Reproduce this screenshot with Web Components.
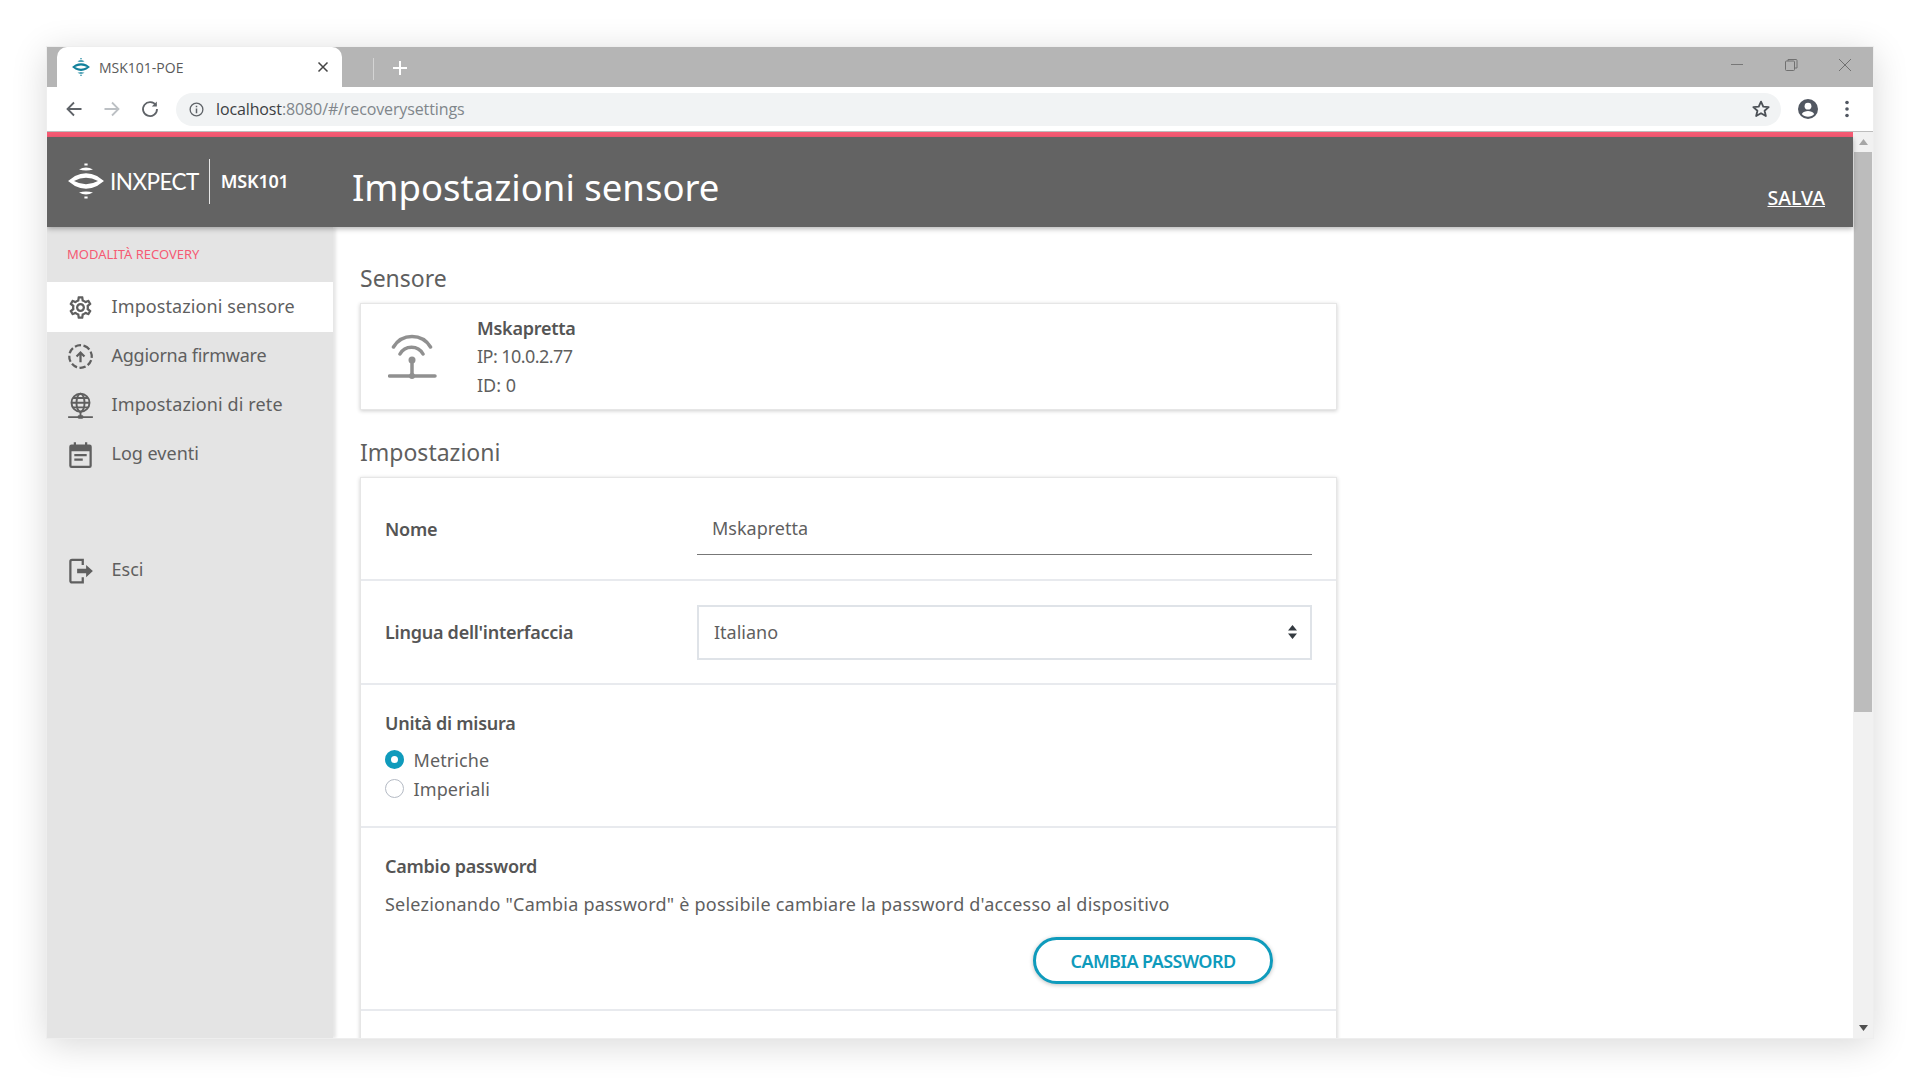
<!DOCTYPE html>
<html lang="it">
<head>
<meta charset="utf-8">
<title>MSK101-POE</title>
<style>
  html, body { margin: 0; height: 100%; background: #fff; overflow: hidden; }
  body { font-family: "Noto Sans", "Open Sans", sans-serif; color: #5f5f5f; }
</style>
</head>
<body>
<browser-window>
  <browser-bar slot="bar"></browser-bar>
  <app-header slot="header" title="Impostazioni sensore"></app-header>
  <side-nav slot="nav">
    <nav-item icon="gear" active style="letter-spacing:.1px">Impostazioni sensore</nav-item>
    <nav-item icon="upload" style="letter-spacing:-.25px">Aggiorna firmware</nav-item>
    <nav-item icon="globe" style="letter-spacing:.12px">Impostazioni di rete</nav-item>
    <nav-item icon="calendar">Log eventi</nav-item>
    <nav-item icon="exit" slot="bottom">Esci</nav-item>
  </side-nav>
  <settings-page slot="main"></settings-page>
</browser-window>

<script>
// Inxpect mark: dots, arcs and a pointed ring with a lens-shaped hole
const LOGO = `
  <rect x="-1.6" y="-17.5" width="3.2" height="2"/>
  <path d="M-7-11.500Q0-15.500 7-11.500Q0-9.500 -7-11.500Z"/>
  <path fill-rule="evenodd" d="M-18 0L-11-5Q0-10.500 11-5L18 0L11 5Q0 10.500-11 5ZM-12 0Q0 6.500 12 0Q0-6.500-12 0Z"/>
  <path d="M-7 11.500Q0 15.500 7 11.500Q0 9.500-7 11.500Z"/>
  <rect x="-1.6" y="15.5" width="3.2" height="2"/>`;

const ICONS = {
  gear: `<path fill="currentColor" d="M19.43 12.98c.04-.32.07-.64.07-.98 0-.34-.03-.66-.07-.98l2.11-1.65c.19-.15.24-.42.12-.64l-2-3.46c-.09-.16-.26-.25-.44-.25-.06 0-.12.01-.17.03l-2.49 1c-.52-.4-1.08-.73-1.69-.98l-.38-2.65C14.46 2.18 14.25 2 14 2h-4c-.25 0-.46.18-.49.42l-.38 2.65c-.61.25-1.17.59-1.69.98l-2.49-1c-.06-.02-.12-.03-.18-.03-.17 0-.34.09-.43.25l-2 3.46c-.13.22-.07.49.12.64l2.11 1.65c-.04.32-.07.65-.07.98 0 .33.03.66.07.98l-2.11 1.65c-.19.15-.24.42-.12.64l2 3.46c.09.16.26.25.44.25.06 0 .12-.01.17-.03l2.49-1c.52.4 1.08.73 1.69.98l.38 2.65c.03.24.24.42.49.42h4c.25 0 .46-.18.49-.42l.38-2.65c.61-.25 1.17-.59 1.69-.98l2.49 1c.06.02.12.03.18.03.17 0 .34-.09.43-.25l2-3.46c.12-.22.07-.49-.12-.64l-2.11-1.65zm-1.98-1.71c.04.31.05.52.05.73 0 .21-.02.43-.05.73l-.14 1.13.89.7 1.08.84-.7 1.21-1.27-.51-1.04-.42-.9.68c-.43.32-.84.56-1.25.73l-1.06.43-.16 1.13-.2 1.35h-1.4l-.19-1.35-.16-1.13-1.06-.43c-.43-.18-.83-.41-1.23-.71l-.91-.7-1.06.43-1.27.51-.7-1.21 1.08-.84.89-.7-.14-1.13c-.03-.31-.05-.54-.05-.74s.02-.43.05-.73l.14-1.13-.89-.7-1.08-.84.7-1.21 1.27.51 1.04.42.9-.68c.43-.32.84-.56 1.25-.73l1.06-.43.16-1.13.2-1.35h1.39l.19 1.35.16 1.13 1.06.43c.43.18.83.41 1.23.71l.91.7 1.06-.43 1.27-.51.7 1.21-1.07.85-.89.7.14 1.13zM12 8c-2.21 0-4 1.79-4 4s1.79 4 4 4 4-1.79 4-4-1.79-4-4-4zm0 6c-1.1 0-2-.9-2-2s.9-2 2-2 2 .9 2 2-.9 2-2 2z"/>`,
  upload: `<circle cx="12" cy="12" r="10" fill="none" stroke="currentColor" stroke-width="2" stroke-dasharray="5.5 2.2" transform="rotate(-70 12 12)"/>
    <path fill="none" stroke="currentColor" stroke-width="2" d="M12 17V9M8.5 12L12 8.5 15.5 12"/>`,
  globe: `<g fill="none" stroke="currentColor" stroke-width="1.7"><circle cx="12" cy="9.5" r="8"/><ellipse cx="12" cy="9.5" rx="3.6" ry="8"/><path d="M4 9.5h16M5.2 5.3h13.6M5.2 13.7h13.6M12 17.5V22M1 22.3h22"/></g><rect x="9.5" y="20.7" width="5" height="3" rx="1" fill="currentColor"/>`,
  calendar: `<path fill="currentColor" fill-rule="evenodd" d="M4 3h2V1h2v2h8V1h2v2h2a2 2 0 0 1 2 2v17a2 2 0 0 1-2 2H4a2 2 0 0 1-2-2V5a2 2 0 0 1 2-2zm0 6v13h16V9H4z"/><path fill="currentColor" d="M6.5 11.5h11v2h-11zM6.5 15.5h7.500v2h-7.500z"/>`,
  exit: `<path fill="none" stroke="currentColor" stroke-width="2" d="M14 7V2.500H4.500a1.500 1.500 0 0 0-1.500 1.500v17a1.500 1.500 0 0 0 1.500 1.500H14V18"/><path fill="currentColor" d="M9 10.500h8V7l6 5.500-6 5.500v-3.500H9z"/>`
};

// Browser window frame: tab strip on top, page and scrollbar under it
class BrowserWindow extends HTMLElement {
  constructor() {
    super();
    this.attachShadow({ mode: "open" }).innerHTML = `
      <style>
        :host { display: flex; flex-direction: column; height: 991px; margin: 47px 47px 0 47px; box-shadow: 0 0 0 1px #eee, 0 6px 34px rgba(0,0,0,.16); background: #fff; overflow: hidden; }
        .app { flex: 1; display: flex; min-height: 0; }
        .page { flex: 1; min-width: 0; display: flex; flex-direction: column; }
        .pink { height: 5px; background: #f65a73; flex: none; }
        .body { flex: 1; display: flex; min-height: 0; }
        .main { flex: 1; min-width: 0; overflow: hidden; }
      </style>
      <slot name="bar"></slot>
      <div class="app">
        <div class="page">
          <div class="pink"></div>
          <slot name="header"></slot>
          <div class="body">
            <slot name="nav"></slot>
            <div class="main"><slot name="main"></slot></div>
          </div>
        </div>
        <page-scrollbar></page-scrollbar>
      </div>`;
  }
}

class BrowserBar extends HTMLElement {
  constructor() {
    super();
    this.attachShadow({ mode: "open" }).innerHTML = `
      <style>
        :host { display: block; font-family: "Open Sans", "Liberation Sans", sans-serif; flex: none; }
        .strip { height: 40px; background: #b5b5b5; display: flex; padding-left: 10px; position: relative; }
        .tab { width: 285px; height: 40px; background: #fff; border-radius: 10px 10px 0 0; display: flex; align-items: center; box-sizing: border-box; padding-left: 15px; font-size: 14px; color: #5a5a5a; }
        .tab .fav { width: 18px; height: 18px; flex: none; margin-right: 9px; }
        .tab .name { flex: 1; }
        .tab .x { width: 12px; height: 12px; margin-right: 13px; }
        .sep { width: 1px; height: 22px; background: #d4d4d4; margin: 11px 0 0 31px; }
        .plus { width: 14px; height: 14px; margin: 14px 0 0 19px; }
        .ctl { margin-left: auto; display: flex; padding-right: 21px; gap: 40px; }
        .ctl svg { width: 14px; height: 14px; margin-top: 11px; }
        .tools { height: 45px; background: #fff; display: flex; align-items: center; box-sizing: border-box; border-bottom: 1px solid #bdbdbd; }
        .nav { width: 18px; height: 18px; margin-left: 18px; flex: none; }
        .omni { flex: 1; height: 33px; margin: 0 0 0 17px; background: #f1f3f4; border-radius: 17px; display: flex; align-items: center; font-size: 16px; letter-spacing: -.12px; color: #80868b; }
        .omni .info { width: 15px; height: 15px; margin: 0 12px 0 13px; flex: none; }
        .omni b { font-weight: 400; color: #3c4043; }
        .omni .star { width: 20px; height: 20px; margin-left: auto; margin-right: 10px; }
        .prof { width: 22px; height: 22px; margin-left: 16px; flex: none; }
        .dots { width: 4px; height: 18px; margin: 0 24px 0 26px; flex: none; }
      </style>
      <div class="strip">
        <div class="tab">
          <svg class="fav" viewBox="-18 -18 36 36" fill="#11809b">${LOGO}</svg>
          <span class="name">MSK101-POE</span>
          <svg class="x" viewBox="0 0 12 12"><path d="M1.500 1.500l9 9M10.500 1.500l-9 9" stroke="#444" stroke-width="1.500"/></svg>
        </div>
        <div class="sep"></div>
        <svg class="plus" viewBox="0 0 14 14"><path d="M7 0v14M0 7h14" stroke="#fff" stroke-width="2"/></svg>
        <div class="ctl">
          <svg viewBox="0 0 14 14"><path d="M1 6.500h12" stroke="#777" stroke-width="1"/></svg>
          <svg viewBox="0 0 14 14" fill="none" stroke="#707070"><rect x="1.500" y="3" width="9" height="9.500" rx="1"/><path d="M4 3V1.500h8a1 1 0 0 1 1 1V10h-2.500"/></svg>
          <svg viewBox="0 0 14 14"><path d="M1 1l12 12M13 1L1 13" stroke="#707070" stroke-width="1"/></svg>
        </div>
      </div>
      <div class="tools">
        <svg class="nav" viewBox="0 0 18 18" fill="none" stroke="#5f6368" stroke-width="1.800"><path d="M16.500 9h-14M9 2.500L2.500 9 9 15.500"/></svg>
        <svg class="nav" style="margin-left:20px" viewBox="0 0 18 18" fill="none" stroke="#bcc0c4" stroke-width="1.800"><path d="M1.500 9h14M9 2.500L15.500 9 9 15.500"/></svg>
        <svg class="nav" style="margin-left:20px" viewBox="0 0 18 18" fill="none" stroke="#5f6368" stroke-width="1.800"><path d="M15 5.500A7 7 0 1 0 16 9"/><path d="M15.800 1.500v5h-5" stroke-width="0" fill="#5f6368"/></svg>
        <div class="omni">
          <svg class="info" viewBox="0 0 16 16" fill="none" stroke="#5f6368" stroke-width="1.400"><circle cx="8" cy="8" r="6.800"/><path d="M8 7v5M8 4v1.600" stroke-width="1.600"/></svg>
          <span><b>localhost</b>:8080/#/recoverysettings</span>
          <svg class="star" viewBox="0 0 24 24" fill="none" stroke="#4b5056" stroke-width="2.200" stroke-linejoin="round"><path d="M12 3.200l2.700 6 6.500.6-4.900 4.300 1.500 6.400L12 17.100l-5.800 3.400 1.500-6.400-4.900-4.300 6.500-.6z"/></svg>
        </div>
        <svg class="prof" viewBox="0 0 22 22"><circle cx="11" cy="11" r="10" fill="#515761"/><circle cx="11" cy="8.200" r="3.400" fill="#fff"/><path d="M4.800 16c1.400-2 3.800-2.900 6.200-2.900s4.800.9 6.200 2.900c-1.500 1.800-3.700 2.800-6.200 2.800s-4.700-1-6.200-2.800z" fill="#fff"/></svg>
        <svg class="dots" viewBox="0 0 4 18" fill="#515761"><circle cx="2" cy="2.500" r="1.800"/><circle cx="2" cy="9" r="1.800"/><circle cx="2" cy="15.500" r="1.800"/></svg>
      </div>`;
  }
}

class PageScrollbar extends HTMLElement {
  constructor() {
    super();
    this.attachShadow({ mode: "open" }).innerHTML = `
      <style>
        :host { display: flex; flex-direction: column; width: 20px; flex: none; background: #f1f1f1; box-sizing: border-box; padding: 0 1px 0 1px; }
        .arrow { height: 20px; flex: none; display: flex; align-items: center; justify-content: center; }
        .thumb { height: 560px; background: #bcbcbc; flex: none; }
        .fill { flex: 1; }
        svg { width: 9px; height: 6px; }
      </style>
      <div class="arrow"><svg viewBox="0 0 9 6"><path d="M4.500 0L9 6H0z" fill="#a6a6a6"/></svg></div>
      <div class="thumb"></div>
      <div class="fill"></div>
      <div class="arrow"><svg viewBox="0 0 9 6"><path d="M0 0h9L4.500 6z" fill="#505050"/></svg></div>`;
  }
}

class AppHeader extends HTMLElement {
  constructor() {
    super();
    const title = this.getAttribute("title");
    this.attachShadow({ mode: "open" }).innerHTML = `
      <style>
        :host { display: flex; flex: none; height: 90px; background: #636363; color: #fff; box-shadow: 0 2px 5px rgba(0,0,0,.28); position: relative; z-index: 3; }
        .brand { width: 305px; flex: none; display: flex; align-items: center; box-sizing: border-box; padding: 0 0 2px 21px; }
        .brand svg { width: 36px; height: 36px; flex: none; }
        .inx { font: 400 22.5px "Lato", sans-serif; margin-left: 6px; letter-spacing: -.55px; }
        .bar { width: 1px; height: 45px; background: #e6e6e6; margin: 0 11px 0 10px; }
        .msk { font-size: 18px; font-weight: 600; letter-spacing: -.2px; }
        h1 { flex: 1; margin: 0; font-size: 36.5px; font-weight: 400; line-height: 90px; padding-top: 5px; box-sizing: border-box; }
        a { align-self: flex-end; margin: 0 28px 16px 0; font-size: 19.5px; font-weight: 500; color: #fff; text-decoration: underline; line-height: 26px; }
      </style>
      <div class="brand">
        <svg viewBox="-18 -18 36 36" fill="#fff">${LOGO}</svg>
        <span class="inx">INXPECT</span>
        <div class="bar"></div>
        <span class="msk">MSK101</span>
      </div>
      <h1>${title}</h1>
      <a>SALVA</a>`;
  }
}

class SideNav extends HTMLElement {
  constructor() {
    super();
    this.attachShadow({ mode: "open" }).innerHTML = `
      <style>
        :host { display: block; width: 286px; flex: none; background: #e4e4e4; box-shadow: 3px 0 3px rgba(0,0,0,.1); position: relative; z-index: 2; }
        .mode { font-size: 13px; color: #f65a73; padding: 17px 0 0 20px; height: 38px; line-height: 20px; }
        .top { margin-bottom: 67px; display: flex; flex-direction: column; }
      </style>
      <div class="mode">MODALITÀ RECOVERY</div>
      <div class="top"><slot></slot></div>
      <slot name="bottom"></slot>`;
  }
}

class NavItem extends HTMLElement {
  constructor() {
    super();
    const icon = ICONS[this.getAttribute("icon")];
    this.attachShadow({ mode: "open" }).innerHTML = `
      <style>
        :host { display: flex; align-items: center; box-sizing: border-box; height: 49px; padding-bottom: 4px; font-size: 18px; color: #5f5f5f; }
        :host([active]) { background: #fff; height: 50px; padding-bottom: 2px; }
        svg { width: 27px; height: 27px; margin: 3px 17.5px 0 20px; flex: none; }
      </style>
      <svg viewBox="0 0 24 24">${icon}</svg>
      <slot></slot>`;
  }
}

class CardBox extends HTMLElement {
  constructor() {
    super();
    this.attachShadow({ mode: "open" }).innerHTML = `
      <style>
        :host { display: block; width: 977px; box-sizing: border-box; background: #fff; border: 1px solid #e6e6e6; box-shadow: 0 1px 4px rgba(0,0,0,.2); }
      </style>
      <slot></slot>`;
  }
}

class FormRow extends HTMLElement {
  constructor() {
    super();
    this.attachShadow({ mode: "open" }).innerHTML = `
      <style>
        :host { display: block; box-sizing: border-box; padding: 0 24px; border-bottom: 2px solid #e8eaee; }
        :host(:last-child) { border-bottom: 0; }
      </style>
      <slot></slot>`;
  }
}

class RadioOption extends HTMLElement {
  constructor() {
    super();
    this.attachShadow({ mode: "open" }).innerHTML = `
      <style>
        :host { display: flex; align-items: center; height: 29px; font-size: 18px; letter-spacing: .1px; color: #5f5f5f; }
        i { width: 19px; height: 19px; box-sizing: border-box; border-radius: 50%; border: 1px solid #b4bac4; background: #fff; margin-right: 9.5px; flex: none; }
        :host([checked]) i { border: 6px solid #0f9bbc; }
      </style>
      <i></i><slot></slot>`;
  }
}

class SettingsPage extends HTMLElement {
  constructor() {
    super();
    this.attachShadow({ mode: "open" }).innerHTML = `
      <style>
        :host { display: block; padding: 0 0 0 27px; color: #5f5f5f; font-size: 18px; }
        h2 { margin: 0; font-size: 23px; font-weight: 400; line-height: 32px; }
        .h1 { padding-top: 35px; height: 41px; }
        .h2 { margin-top: 26px; height: 41px; }
        .sensor { display: flex; height: 105px; align-items: center; padding-left: 27px; }
        .sensor svg { width: 50px; height: 50px; flex: none; margin-right: 39px; }
        .sensor div { line-height: 28.500px; }
        .ip { letter-spacing: -.55px; }
        b { font-weight: 600; color: #555; letter-spacing: -.25px; }
        .line { height: 101px; display: flex; align-items: center; }
        .line.tall { height: 102px; }
        .line b { width: 312px; flex: none; }
        .field { width: 616px; box-sizing: border-box; height: 54px; display: flex; align-items: center; padding: 0 15px; color: #5f5f5f; }
        .input { border-bottom: 1px solid #777; margin-top: -1px; }
        .select { height: 55px; border: 2px solid #dfe3e8; justify-content: space-between; padding-right: 13px; }
        .select svg { width: 9px; height: 14px; }
        .units { height: 141px; padding-top: 25px; box-sizing: border-box; }
        .units b { display: block; line-height: 26px; margin-bottom: 9px; }
        .pwd { height: 181px; padding-top: 25px; box-sizing: border-box; }
        .pwd b { display: block; line-height: 26px; margin-bottom: 12px; }
        .pwd p { margin: 0; line-height: 26px; letter-spacing: .22px; }
        .actions { display: flex; justify-content: flex-end; padding: 20px 39px 0 0; }
        button { width: 240px; height: 47px; border: 3px solid #0f9bbc; border-radius: 24px; background: #fff; color: #0f9bbc; font: 600 18px "Noto Sans", sans-serif; letter-spacing: -.57px; box-shadow: 0 1px 4px rgba(0,0,0,.25); padding: 0; }
        .rest { height: 40px; }
      </style>
      <h2 class="h1">Sensore</h2>
      <card-box>
        <div class="sensor">
          <svg viewBox="0 0 50 50" fill="none" stroke="#909090" stroke-width="3.500" stroke-linecap="round">
            <path d="M5.500 15C14 1 34 1 42.500 15M12 22C17 13 30 13 35 22M24 28V44M1.500 44H47"/>
            <circle cx="24" cy="28" r="3.500" fill="#909090" stroke="none"/>
            <circle cx="24" cy="44" r="3" fill="#909090" stroke="none"/>
          </svg>
          <div><b>Mskapretta</b><br><span class="ip">IP: 10.0.2.77</span><br>ID: 0</div>
        </div>
      </card-box>
      <h2 class="h2">Impostazioni</h2>
      <card-box>
        <form-row><div class="line"><b>Nome</b><div class="field input">Mskapretta</div></div></form-row>
        <form-row><div class="line tall"><b>Lingua dell'interfaccia</b><div class="field select">Italiano
          <svg viewBox="0 0 9 14" fill="#343a40"><path d="M4.500 0L9 5.500H0zM0 8.500h9L4.500 14z"/></svg></div></div></form-row>
        <form-row><div class="units"><b>Unità di misura</b><radio-option checked>Metriche</radio-option><radio-option>Imperiali</radio-option></div></form-row>
        <form-row><div class="pwd"><b>Cambio password</b><p>Selezionando "Cambia password" è possibile cambiare la password d'accesso al dispositivo</p><div class="actions"><button>CAMBIA PASSWORD</button></div></div></form-row>
        <form-row><div class="rest"></div></form-row>
      </card-box>`;
  }
}

customElements.define("page-scrollbar", PageScrollbar);
customElements.define("browser-window", BrowserWindow);
customElements.define("browser-bar", BrowserBar);
customElements.define("app-header", AppHeader);
customElements.define("side-nav", SideNav);
customElements.define("nav-item", NavItem);
customElements.define("card-box", CardBox);
customElements.define("form-row", FormRow);
customElements.define("radio-option", RadioOption);
customElements.define("settings-page", SettingsPage);
</script>
</body>
</html>
